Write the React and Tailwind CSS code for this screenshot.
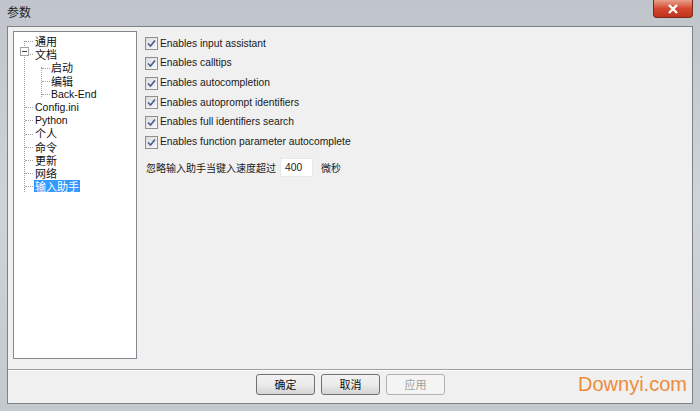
import React from "react";

const UI = { fontFamily: '"Liberation Sans", "Noto Sans CJK SC", sans-serif' };
const CJK = { fontFamily: '"Noto Sans CJK SC", "Liberation Sans", sans-serif' };

function Check({ label }) {
  return (
    <div className="flex items-center h-[19.7px]">
      <span className="w-[13px] h-[13px] border border-[#8e8f8f] bg-gradient-to-br from-[#dcdcdc] to-[#f8f8f8] flex items-center justify-center">
        <svg width="9" height="9" viewBox="0 0 9 9">
          <path d="M1 4.5 L3.5 7 L8 1.5" fill="none" stroke="#4a5f97" strokeWidth="1.7" />
        </svg>
      </span>
      <span className="ml-[2px] text-[10.3px] text-[#1a1a1a] leading-none">{label}</span>
    </div>
  );
}

function TreeItem({ x, label, sel, cjk }) {
  return (
    <div className="h-[13.2px] flex items-center relative" style={{ paddingLeft: x }}>
      <span
        className={
          (cjk ? "text-[11px] " : "text-[10.5px] ") +
          "leading-[12px] px-[1px] " +
          (sel ? "bg-[#3399ff] text-white" : "text-[#111]")
        }
        style={cjk ? CJK : UI}
      >
        {label}
      </span>
    </div>
  );
}

export default function App() {
  const items = [
    { x: 20, label: "通用", cjk: true },
    { x: 20, label: "文档", cjk: true },
    { x: 36, label: "启动", cjk: true },
    { x: 36, label: "编辑", cjk: true },
    { x: 36, label: "Back-End" },
    { x: 20, label: "Config.ini" },
    { x: 20, label: "Python" },
    { x: 20, label: "个人", cjk: true },
    { x: 20, label: "命令", cjk: true },
    { x: 20, label: "更新", cjk: true },
    { x: 20, label: "网络", cjk: true },
    { x: 20, label: "输入助手", cjk: true, sel: true },
  ];
  return (
    <div
      className="w-[700px] h-[411px] flex flex-col bg-gradient-to-b from-[#bfc5cb] via-[#cfd4d8] to-[#c4c9ce] relative overflow-hidden"
      style={UI}
    >
      {/* title bar */}
      <div className="h-[26px] flex items-start relative">
        <span className="ml-[7px] mt-[6px] text-[12px] text-[#222] leading-none" style={CJK}>
          参数
        </span>
        <div className="absolute right-[7px] top-0 w-[40px] h-[18px] rounded-b-[4px] border border-[#7a2a1a] border-t-0 bg-gradient-to-b from-[#e8a08c] via-[#d2472d] to-[#c0341d] flex items-center justify-center">
          <svg width="12" height="10" viewBox="0 0 12 10">
            <path d="M2 1 L10 9 M10 1 L2 9" stroke="#fff" strokeWidth="2.4" />
          </svg>
        </div>
      </div>
      {/* client */}
      <div className="flex-1 mx-[7px] mb-[7px] bg-[#f0f0f0] border border-[#7c8287] flex flex-col">
        <div className="flex">
          {/* tree */}
          <div className="ml-[5px] mt-[4px] w-[124px] h-[328px] bg-white border border-[#828790] relative pt-[2.5px]">
            <div className="absolute left-[10px] top-[9px] h-[151px] border-l border-dotted border-[#a0a0a0]" />
            <div className="absolute left-[27px] top-[35px] h-[30px] border-l border-dotted border-[#a0a0a0]" />
            {items.map((it, i) => (
              <div
                key={"h" + i}
                className="absolute border-t border-dotted border-[#a0a0a0]"
                style={{
                  left: it.x === 20 ? 11 : 28,
                  width: 8,
                  top: 2.5 + i * 13.2 + 6.6,
                }}
              />
            ))}
            <div className="absolute left-[6px] top-[15px] w-[9px] h-[9px] border border-[#a0a0a0] bg-white flex items-center justify-center">
              <div className="w-[5px] h-[1px] bg-[#404040]" />
            </div>
            {items.map((it, i) => (
              <TreeItem key={i} {...it} />
            ))}
          </div>
          {/* right panel */}
          <div className="ml-[8px] mt-[7px] flex flex-col">
            <Check label="Enables input assistant" />
            <Check label="Enables calltips" />
            <Check label="Enables autocompletion" />
            <Check label="Enables autoprompt identifiers" />
            <Check label="Enables full identifiers search" />
            <Check label="Enables function parameter autocomplete" />
            <div className="flex items-center mt-[6px] ml-[1px]">
              <span className="text-[10px] text-[#1a1a1a]" style={CJK}>
                忽略输入助手当键入速度超过
              </span>
              <div className="ml-[4px] w-[33px] h-[19px] bg-white border border-[#e3e9ef] flex items-center pl-[4px]">
                <span className="text-[10.3px] text-[#1a1a1a]">400</span>
              </div>
              <span className="ml-[8px] text-[10px] text-[#1a1a1a]" style={CJK}>
                微秒
              </span>
            </div>
          </div>
        </div>
        <div className="mt-[10px] h-[1px] bg-[#a0a0a0] border-b border-white box-content" />
        <div className="flex justify-center mt-[3px] gap-[6px] pl-[1px]">
          <button className="w-[59px] h-[21px] rounded-[3px] border border-[#707070] bg-gradient-to-b from-[#f2f2f2] via-[#ebebeb] to-[#d5d5d5] text-[11px] text-[#111]" style={CJK}>
            确定
          </button>
          <button className="w-[59px] h-[21px] rounded-[3px] border border-[#707070] bg-gradient-to-b from-[#f2f2f2] via-[#ebebeb] to-[#d5d5d5] text-[11px] text-[#111]" style={CJK}>
            取消
          </button>
          <button className="w-[59px] h-[21px] rounded-[3px] border border-[#adb2b5] bg-[#f4f4f4] text-[11px] text-[#a0a0a0]" style={CJK}>
            应用
          </button>
        </div>
      </div>
      <div
        className="absolute left-[578px] top-[374px] text-[20px] text-[#ee8c3a] leading-none"
        style={{ fontFamily: '"Liberation Sans", sans-serif' }}
      >
        Downyi.com
      </div>
    </div>
  );
}
